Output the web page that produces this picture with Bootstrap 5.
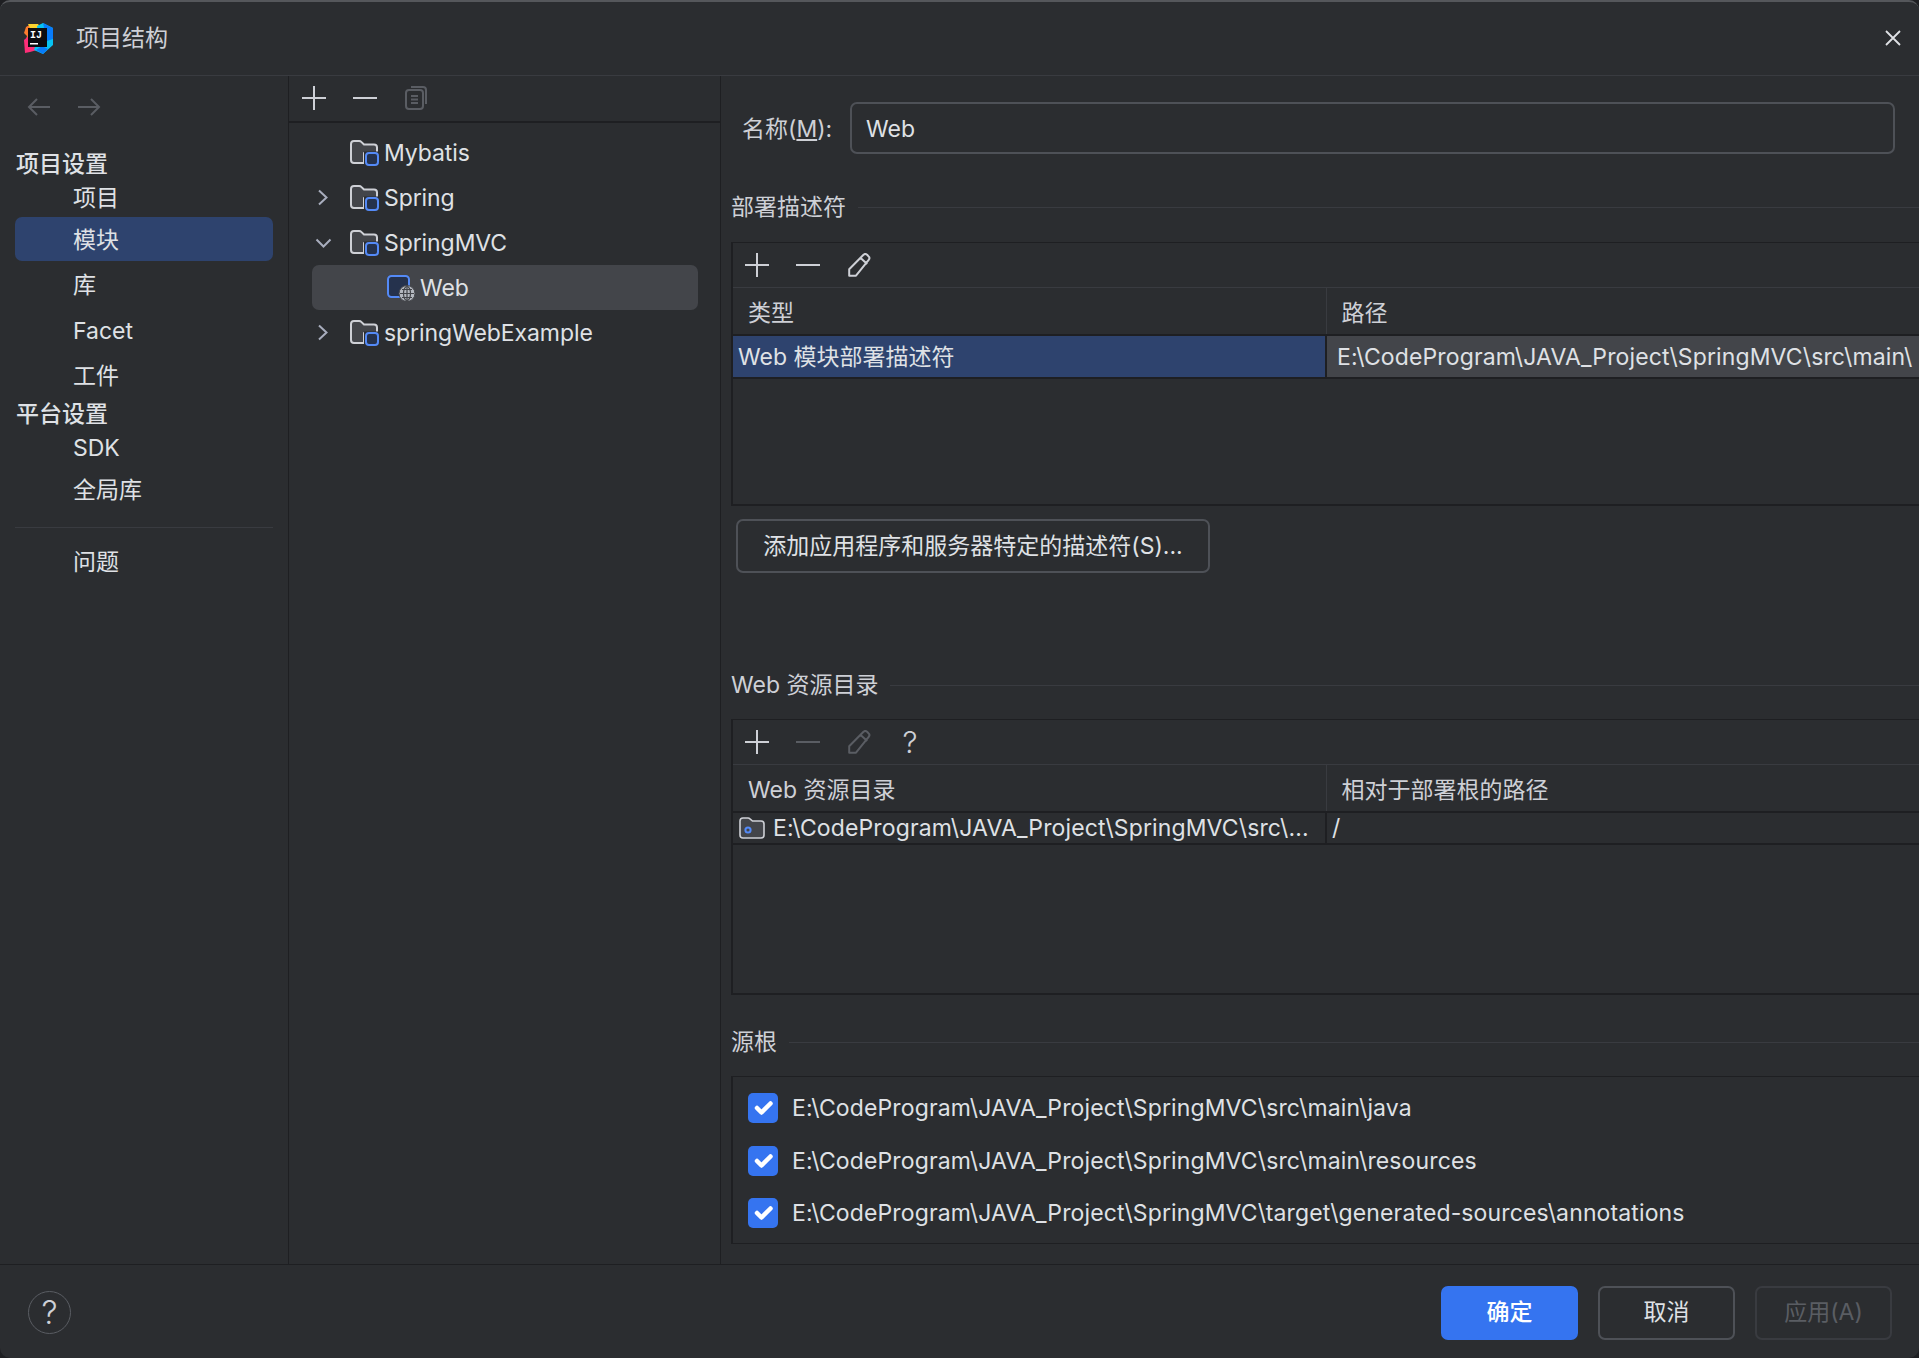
<!DOCTYPE html>
<html lang="zh-CN">

<head>
    <meta charset="UTF-8">
    <title>项目结构</title>
    <link href="https://cdn.jsdelivr.net/npm/bootstrap@5.3.3/dist/css/bootstrap.min.css" rel="stylesheet">
    <style>
        html, body {
            height: 100%;
            background: #1e1f22;
        }

        body {
            font-family: Inter, "Noto Sans CJK SC", sans-serif;
            font-size: 23px;
            line-height: 30px;
            color: #dfe1e5;
            overflow: hidden;
        }

        svg { display: block; flex: none; }

        .ide-window {
            height: 1358px;
            background: #2b2d30;
            border-top: 2px solid #55575b;
            border-radius: 10px;
            overflow: hidden;
        }

        .title-bar {
            height: 74px;
            flex: none;
            padding-left: 23px;
            padding-bottom: 2px;
            border-bottom: 1px solid #393b40;
            gap: 23px;
        }

        .title-bar span { color: #ced0d6; }
        .close-x { margin-left: auto; margin-right: 18px; }

        /* left settings nav */
        .side-nav {
            width: 289px;
            flex: none;
            border-right: 1px solid #1e1f22;
            padding-top: 20px;
        }

        .nav-arrows { padding-left: 27px; gap: 26px; height: 22px; margin-bottom: 31px; align-items: center; }
        .nav-head { padding-left: 16px; height: 30px; line-height: 30px; color: #dfe1e5; font-weight: 500; }
        .nav-row { margin: 0 15px; padding-left: 58px; height: 45.5px; line-height: 46px; color: #dfe1e5; }
        .nav-row.is-first { height: 32px; line-height: 34px; margin-top: 2px; margin-bottom: 4px; }
        .nav-row.is-active { background: #2e436e; border-radius: 7px; height: 44px; line-height: 47px; margin-bottom: 1px; }
        .nav-sep { border-top: 1px solid #393b40; margin: 15px 15px 11px; }

        /* module tree */
        .tree-col {
            width: 432px;
            flex: none;
            border-right: 1px solid #1e1f22;
        }

        .tree-tools {
            height: 47px;
            padding-left: 13px;
            padding-bottom: 2px;
            gap: 27px;
            border-bottom: 2px solid #1e1f22;
        }

        .tree-list { padding-top: 7px; }
        .tree-row { height: 45px; padding-left: 61px; gap: 5px; position: relative; margin: 0 22px 0 0; letter-spacing: -.08px; }
        .tree-row.is-picked { background: #43454a; border-radius: 7px; margin-left: 23px; padding-left: 75px; gap: 5px; }
        .tree-caret { position: absolute; left: 28px; top: 14px; }

        /* detail pane */
        .detail-col { min-width: 0; flex: 1 1 0; padding-left: 10px; padding-top: 26px; overflow: hidden; }
        .name-row { height: 52px; padding-left: 11px; padding-right: 24px; }
        .name-row label { width: 108px; flex: none; color: #ced0d6; padding-top: 1px; }
        .name-input.form-control {
            height: 52px;
            font-size: 23px;
            background: #2b2d30;
            color: #dfe1e5;
            border: 2px solid #4e5157;
            border-radius: 7px;
            padding: 1px 14px 0;
            box-shadow: none;
        }

        .group-title { height: 30px; gap: 12px; color: #ced0d6; white-space: nowrap; }
        .group-title::after { content: ""; flex: 1; border-top: 1px solid #393b40; }
        .mt-desc { margin-top: 38px; }
        .mt-web { margin-top: 97px; }
        .mt-root { margin-top: 32px; }

        .pane-box { border: 2px solid #1e1f22; border-right: 0; border-top-width: 1px; overflow: hidden; margin-right: -2px; }
        .box-desc { height: 264px; margin-top: 20px; }
        .box-web { height: 276px; margin-top: 19px; }
        .box-root { height: 168px; margin-top: 19px; border-bottom-width: 1px; padding-top: 5px; }

        .pane-tools { height: 45px; padding-left: 12px; gap: 27px; border-bottom: 1px solid #393b40; }

        .path-text { letter-spacing: .13px; }

        .pane-table { table-layout: fixed; width: 1190px; --bs-table-bg: transparent; --bs-table-color: #dfe1e5; margin: 0; }
        .pane-table > thead > tr > th,
        .pane-table > tbody > tr > td {
            padding: 0;
            border: 0;
            white-space: nowrap;
            overflow: hidden;
            font-weight: 400;
            color: #dfe1e5;
            background: transparent;
            box-shadow: none;
            vertical-align: middle;
        }

        .pane-table > thead > tr > th { height: 47px; padding: 3px 0 0 15px; color: #ced0d6; }
        .pane-table > thead > tr > th + th { border-left: 1px solid #393b40; padding-left: 15px; }
        .pane-table > tbody > tr > td { border-top: 2px solid #1e1f22; border-bottom: 2px solid #1e1f22; }
        .pane-table .col-left { width: 593px; }
        .pane-table > tbody > .row-sel > td { height: 43px; }
        .pane-table > tbody > .row-sel > .cell-a { background: #2e436e; padding-left: 5px; border-right: 2px solid #1e1f22; }
        .pane-table > tbody > .row-sel > .cell-b { background: #43454a; padding-left: 10px; }
        .pane-table > tbody > .row-src > td { height: 32px; line-height: 28px; }
        .pane-table > tbody > .row-src > .cell-a { border-right: 2px solid #1e1f22; padding-left: 6px; }
        .pane-table > tbody > .row-src > .cell-b { padding-left: 5px; }

        .btn-desc.btn {
            display: block;
            height: 54px;
            width: 474px;
            margin: 13px 0 0 5px;
            padding: 0;
            font-size: 23px;
            color: #dfe1e5;
            background: transparent;
            border: 2px solid #4e5157;
            border-radius: 7px;
        }

        .root-row { height: 52.500px; padding-left: 15px; gap: 14px; white-space: nowrap; }
        .root-row .form-check-input {
            width: 30px;
            height: 30px;
            margin: 0;
            flex: none;
            border: 0;
            border-radius: 5px;
            background-color: #3574f0;
            --bs-form-check-bg-image: url("data:image/svg+xml,%3csvg xmlns='http://www.w3.org/2000/svg' viewBox='0 0 30 30'%3e%3cpath fill='none' stroke='%23fff' stroke-width='4' stroke-linecap='round' stroke-linejoin='round' d='M7.500 16l5.500 6L23.500 9.500'/%3e%3c/svg%3e");
        }

        /* footer */
        .foot-bar { height: 94px; flex: none; border-top: 1px solid #1e1f22; padding: 2px 27px 0 28px; }
        .help-ring { width: 43px; height: 43px; border: 1px solid #5a5d63; border-radius: 50%; font-size: 32px; line-height: 41px; text-align: center; color: #ced0d6; font-weight: 300; }
        .foot-btn.btn { width: 137px; height: 54px; padding: 0; font-size: 23px; border-radius: 7px; background: transparent; border: 2px solid #4e5157; color: #dfe1e5; margin-left: 20px; }
        .foot-btn.btn-primary { background: #3574f0; border-color: #3574f0; color: #fff; margin-left: 0; font-weight: 500; }
        .foot-btn.btn:disabled { opacity: 1; border-color: #393b40; color: #5a5d63; }
    </style>
</head>

<body>
    <svg width="0" height="0" style="position:absolute">
        <defs>
            <symbol id="i-plus" viewBox="0 0 24 24"><path d="M12 0v24M0 12h24" stroke="currentColor" stroke-width="2" fill="none"/></symbol>
            <symbol id="i-minus" viewBox="0 0 24 24"><path d="M0 12h24" stroke="currentColor" stroke-width="2" fill="none"/></symbol>
            <symbol id="i-pen" viewBox="0 0 24 24"><path d="M16.500 1.800a2.600 2.600 0 0 1 3.600 0l1.400 1.400a2.600 2.600 0 0 1 .2 3.600L9 22.700H2.200v-6.400zM13.600 5l6.600 6" stroke="currentColor" stroke-width="2" fill="none" stroke-linejoin="round"/></symbol>
            <symbol id="i-folder" viewBox="0 0 29 26">
                <path d="M14 23H4a3 3 0 0 1-3-3V4a3 3 0 0 1 3-3h5.200a3 3 0 0 1 2.100.9L14 4.500h10a3 3 0 0 1 3 3V13H14z" fill="#43454a" stroke="#ced0d6" stroke-width="2" stroke-linejoin="round"/>
                <rect x="14" y="11.500" width="15" height="14.500" fill="#2b2d30"/>
                <rect x="16" y="13" width="12" height="12" rx="3" fill="#25324d" stroke="#548af7" stroke-width="2"/>
            </symbol>
        </defs>
    </svg>

    <div class="ide-window d-flex flex-column">

        <!-- Title bar -->
        <header class="title-bar d-flex align-items-center">
            <svg width="30" height="32" viewBox="0 0 30 32">
                <path d="M3 5l5-3 7 1 3 5-8 8-4 3-4 1 2-6-3-3z" fill="#fe7c2e"/>
                <path d="M5 2l10 0 4 5-9 5z" fill="#fdd32e"/>
                <path d="M1 18l7-6 8 9-2 7-7 2-5 1z" fill="#fe2e78"/>
                <path d="M14 4l6-3 10 5 0 17-10 9-9-4 4-13z" fill="#07c3f2"/>
                <path d="M20 1l10 5v11l-6 2z" fill="#087cfa"/>
                <path d="M13 28l7 4 5-5-6-3z" fill="#087cfa"/>
                <rect x="5" y="6" width="19" height="19" fill="#0c0c10"/>
                <text x="7" y="16" font-family="'Liberation Mono', monospace" font-size="10" font-weight="700" fill="#fff">IJ</text>
                <rect x="7" y="21" width="8" height="1.500" fill="#fff"/>
            </svg>
            <span>项目结构</span>
            <svg class="close-x" width="16" height="16" viewBox="0 0 16 16"><path d="M1 1l14 14M15 1L1 15" stroke="#dfe1e5" stroke-width="1.800"/></svg>
        </header>

        <div class="d-flex flex-grow-1" style="min-height:0">

            <!-- Settings nav -->
            <aside class="side-nav">
                <div class="nav-arrows d-flex">
                    <svg width="24" height="20" viewBox="0 0 24 20"><path d="M23 10H2M10 2l-8 8 8 8" stroke="#5a5d63" stroke-width="2" fill="none"/></svg>
                    <svg width="24" height="20" viewBox="0 0 24 20"><path d="M1 10h21M14 2l8 8-8 8" stroke="#5a5d63" stroke-width="2" fill="none"/></svg>
                </div>
                <div class="nav-head">项目设置</div>
                <div class="nav-row is-first">项目</div>
                <div class="nav-row is-active">模块</div>
                <div class="nav-row">库</div>
                <div class="nav-row">Facet</div>
                <div class="nav-row">工件</div>
                <div class="nav-head">平台设置</div>
                <div class="nav-row is-first">SDK</div>
                <div class="nav-row">全局库</div>
                <div class="nav-sep"></div>
                <div class="nav-row">问题</div>
            </aside>

            <!-- Module tree -->
            <section class="tree-col">
                <div class="tree-tools d-flex align-items-center" style="color:#ced0d6">
                    <svg width="24" height="24"><use href="#i-plus"/></svg>
                    <svg width="24" height="24"><use href="#i-minus"/></svg>
                    <svg width="24" height="24" viewBox="0 0 24 24">
                        <rect x="2" y="4" width="17" height="19" rx="3" fill="none" stroke="#5a5d63" stroke-width="2"/>
                        <path d="M7 1h12a3 3 0 0 1 3 3v14" fill="none" stroke="#5a5d63" stroke-width="2"/>
                        <path d="M7 10h7M7 13.500h7M7 17h7" stroke="#5a5d63" stroke-width="2"/>
                    </svg>
                </div>
                <div class="tree-list">
                    <div class="tree-row d-flex align-items-center">
                        <svg width="29" height="26"><use href="#i-folder"/></svg><span>Mybatis</span>
                    </div>
                    <div class="tree-row d-flex align-items-center">
                        <svg class="tree-caret" width="12" height="17" viewBox="0 0 12 17"><path d="M2 1.500l7.500 7-7.500 7" stroke="#a8adbd" stroke-width="2" fill="none"/></svg>
                        <svg width="29" height="26"><use href="#i-folder"/></svg><span>Spring</span>
                    </div>
                    <div class="tree-row d-flex align-items-center">
                        <svg class="tree-caret" style="left:26px;top:18px" width="17" height="10" viewBox="0 0 17 10"><path d="M1.500 1.500l7 7 7-7" stroke="#a8adbd" stroke-width="2" fill="none"/></svg>
                        <svg width="29" height="26"><use href="#i-folder"/></svg><span>SpringMVC</span>
                    </div>
                    <div class="tree-row is-picked d-flex align-items-center">
                        <svg width="28" height="26" viewBox="0 0 28 26">
                            <rect x="1" y="1" width="21" height="21" rx="3.500" fill="#25324d" stroke="#548af7" stroke-width="2"/>
                            <circle cx="20" cy="18.500" r="8" fill="#b4b8bf" stroke="#43454a" stroke-width="1"/>
                            <path d="M13 18.500h14M20 11.500v14M15 14.500h10M15 22.500h10" stroke="#43454a" stroke-width="1.200" fill="none"/>
                            <ellipse cx="20" cy="18.500" rx="3.500" ry="7" fill="none" stroke="#43454a" stroke-width="1.200"/>
                        </svg>
                        <span>Web</span>
                    </div>
                    <div class="tree-row d-flex align-items-center">
                        <svg class="tree-caret" width="12" height="17" viewBox="0 0 12 17"><path d="M2 1.500l7.500 7-7.500 7" stroke="#a8adbd" stroke-width="2" fill="none"/></svg>
                        <svg width="29" height="26"><use href="#i-folder"/></svg><span>springWebExample</span>
                    </div>
                </div>
            </section>

            <!-- Detail pane -->
            <section class="detail-col">
                <div class="name-row d-flex align-items-center">
                    <label for="moduleName">名称(<u>M</u>):</label>
                    <input id="moduleName" class="name-input form-control" type="text" value="Web">
                </div>

                <div class="group-title mt-desc d-flex align-items-center">部署描述符</div>
                <div class="pane-box box-desc">
                    <div class="pane-tools d-flex align-items-center" style="color:#ced0d6">
                        <svg width="24" height="24"><use href="#i-plus"/></svg>
                        <svg width="24" height="24"><use href="#i-minus"/></svg>
                        <svg width="24" height="24"><use href="#i-pen"/></svg>
                    </div>
                    <table class="table pane-table">
                        <thead>
                            <tr><th class="col-left">类型</th><th>路径</th></tr>
                        </thead>
                        <tbody>
                            <tr class="row-sel">
                                <td class="cell-a">Web 模块部署描述符</td>
                                <td class="cell-b path-text">E:\CodeProgram\JAVA_Project\SpringMVC\src\main\</td>
                            </tr>
                        </tbody>
                    </table>
                </div>
                <button class="btn btn-desc" type="button">添加应用程序和服务器特定的描述符(S)...</button>

                <div class="group-title mt-web d-flex align-items-center">Web 资源目录</div>
                <div class="pane-box box-web">
                    <div class="pane-tools d-flex align-items-center" style="color:#ced0d6">
                        <svg width="24" height="24"><use href="#i-plus"/></svg>
                        <svg width="24" height="24" style="color:#5a5d63"><use href="#i-minus"/></svg>
                        <svg width="24" height="24" style="color:#5a5d63"><use href="#i-pen"/></svg>
                        <span style="font-size:30px;width:24px;text-align:center;font-weight:300">?</span>
                    </div>
                    <table class="table pane-table">
                        <thead>
                            <tr><th class="col-left">Web 资源目录</th><th>相对于部署根的路径</th></tr>
                        </thead>
                        <tbody>
                            <tr class="row-src">
                                <td class="cell-a">
                                    <div class="d-flex align-items-center" style="gap:8px">
                                        <svg width="26" height="22" viewBox="0 0 26 22">
                                            <path d="M4 21a3 3 0 0 1-3-3V4a3 3 0 0 1 3-3h5a3 3 0 0 1 2 .8L13.500 4H22a3 3 0 0 1 3 3v11a3 3 0 0 1-3 3z" fill="#43454a" stroke="#ced0d6" stroke-width="1.600"/>
                                            <circle cx="9" cy="13" r="2.600" fill="none" stroke="#548af7" stroke-width="2"/>
                                        </svg>
                                        <span class="path-text">E:\CodeProgram\JAVA_Project\SpringMVC\src\...</span>
                                    </div>
                                </td>
                                <td class="cell-b">/</td>
                            </tr>
                        </tbody>
                    </table>
                </div>

                <div class="group-title mt-root d-flex align-items-center">源根</div>
                <div class="pane-box box-root">
                    <div class="root-row d-flex align-items-center">
                        <input class="form-check-input" type="checkbox" checked>
                        <span class="path-text">E:\CodeProgram\JAVA_Project\SpringMVC\src\main\java</span>
                    </div>
                    <div class="root-row d-flex align-items-center">
                        <input class="form-check-input" type="checkbox" checked>
                        <span class="path-text">E:\CodeProgram\JAVA_Project\SpringMVC\src\main\resources</span>
                    </div>
                    <div class="root-row d-flex align-items-center">
                        <input class="form-check-input" type="checkbox" checked>
                        <span class="path-text">E:\CodeProgram\JAVA_Project\SpringMVC\target\generated-sources\annotations</span>
                    </div>
                </div>
            </section>
        </div>

        <!-- Footer -->
        <footer class="foot-bar d-flex align-items-center">
            <div class="help-ring">?</div>
            <button class="btn btn-primary foot-btn ms-auto" type="button">确定</button>
            <button class="btn foot-btn" type="button">取消</button>
            <button class="btn foot-btn" type="button" disabled>应用(A)</button>
        </footer>
    </div>

    <script src="https://cdn.jsdelivr.net/npm/bootstrap@5.3.3/dist/js/bootstrap.bundle.min.js"></script>
</body>

</html>
